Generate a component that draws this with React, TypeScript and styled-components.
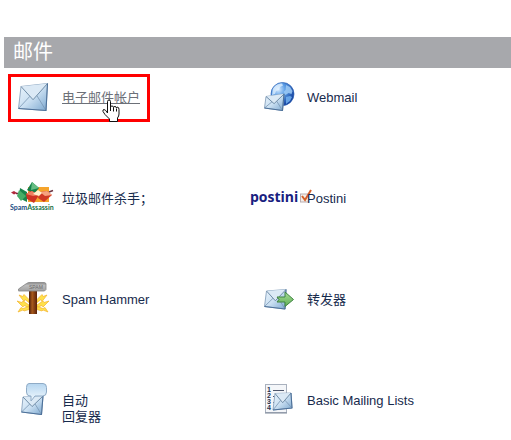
import React from 'react';
import styled, { createGlobalStyle, css } from 'styled-components';

const GlobalStyle = createGlobalStyle`
  * { box-sizing: border-box; }
  body {
    margin: 0;
    background: #fff;
    font-family: "Liberation Sans", Arial, "Noto Sans CJK SC", sans-serif;
    color: #172b4d;
  }
`;

const Panel = styled.main`
  padding: 37px 0 0 4px;
`;

const Heading = styled.h1`
  margin: 0;
  height: 31px;
  padding-left: 9px;
  background: #a7a8ac;
  color: #fff;
  font-size: 20px;
  font-weight: 400;
  line-height: 31px;
`;

const Grid = styled.ul`
  display: grid;
  grid-template-columns: 245px minmax(0, 1fr);
  row-gap: 43px;
  margin: 0;
  padding: 0;
  list-style: none;
`;

const Cell = styled.li`
  position: relative;
  padding-left: 5px;
`;

const Item = styled.a<{ $active?: boolean }>`
  display: flex;
  align-items: flex-start;
  gap: 5px;
  width: fit-content;
  color: inherit;
  text-decoration: none;
  ${(p) =>
    p.$active &&
    css`
      color: #6c7078;
      text-decoration: underline;
      text-underline-offset: 1px;
    `}
`;

const IconSlot = styled.span`
  display: flex;
  flex: none;
  align-items: center;
  justify-content: center;
  width: 48px;
  height: 58px;

  svg {
    flex: none;
    overflow: visible;
  }
`;

const Label = styled.span`
  position: relative;
  padding-top: 22px;
  font-size: 13px;
  line-height: 16px;
  white-space: pre-line;
`;

const Highlight = styled.span`
  position: absolute;
  top: 6px;
  left: 4px;
  width: 142px;
  height: 48px;
  border: 3px solid #f00;
  pointer-events: none;
`;

const Pointer = styled.svg`
  position: absolute;
  top: 31px;
  left: 98px;
  pointer-events: none;
`;

const Gradients = styled.svg`
  position: absolute;
  width: 0;
  height: 0;
`;

type Pt = [number, number];

function Envelope({ tl, tr, br, bl }: { tl: Pt; tr: Pt; br: Pt; bl: Pt }) {
  const mid = (a: Pt, b: Pt, t: number): Pt => [a[0] + (b[0] - a[0]) * t, a[1] + (b[1] - a[1]) * t];
  const tip = mid(mid(tl, tr, 0.5), mid(bl, br, 0.5), 0.6);
  const left = mid(tl, tip, 0.74);
  const right = mid(tr, tip, 0.74);
  return (
    <g strokeLinejoin="round">
      <polygon points={[tl, tr, br, bl].join(' ')} fill="url(#paper)" stroke="#93abc4" />
      <polyline points={[bl, left].join(' ')} fill="none" stroke="#7896b3" strokeWidth="0.8" />
      <polyline points={[br, right].join(' ')} fill="none" stroke="#7896b3" strokeWidth="0.8" />
      <polygon points={[tl, tip, tr].join(' ')} fill="#dbe9f5" stroke="none" />
      <polyline points={[tl, tip, tr].join(' ')} fill="none" stroke="#64829e" strokeWidth="0.9" />
      <polyline points={[bl, br, tr].join(' ')} fill="none" stroke="#4d719a" strokeWidth="1.1" />
    </g>
  );
}

function Defs() {
  return (
    <Gradients aria-hidden="true">
      <defs>
        <linearGradient id="paper" x1="0" y1="0" x2="1" y2="1">
          <stop offset="0" stopColor="#eaf4fc" />
          <stop offset="0.5" stopColor="#cbe0f2" />
          <stop offset="1" stopColor="#7ba7cf" />
        </linearGradient>
        <radialGradient id="globe" cx="0.32" cy="0.3" r="0.75">
          <stop offset="0" stopColor="#d8ecff" />
          <stop offset="0.4" stopColor="#5c9ee6" />
          <stop offset="1" stopColor="#123f9c" />
        </radialGradient>
        <linearGradient id="steel" x1="0" y1="0" x2="0" y2="1">
          <stop offset="0" stopColor="#8a8a8a" />
          <stop offset="0.35" stopColor="#bdbdbd" />
          <stop offset="1" stopColor="#a2a2a2" />
        </linearGradient>
        <linearGradient id="wood" x1="0" y1="0" x2="1" y2="0">
          <stop offset="0" stopColor="#4a1c0a" />
          <stop offset="0.4" stopColor="#a85a1c" />
          <stop offset="1" stopColor="#5a220b" />
        </linearGradient>
        <linearGradient id="bubble" x1="0" y1="0" x2="0" y2="1">
          <stop offset="0" stopColor="#b5d5ef" />
          <stop offset="1" stopColor="#f3faff" />
        </linearGradient>
        <linearGradient id="leaf" x1="0" y1="0" x2="0" y2="1">
          <stop offset="0" stopColor="#a7dc94" />
          <stop offset="1" stopColor="#5fae55" />
        </linearGradient>
      </defs>
    </Gradients>
  );
}

function Svg({ width = 48, children }: { width?: number; children: React.ReactNode }) {
  return (
    <svg width={width} height="48" viewBox={`0 0 ${width} 48`} aria-hidden="true">
      {children}
    </svg>
  );
}

const MailIcon = () => (
  <Svg>
    <Envelope tl={[12, 13.5]} tr={[38.5, 10.5]} br={[37, 37.5]} bl={[9.5, 35.5]} />
  </Svg>
);

const WebmailIcon = () => (
  <Svg>
    <circle cx="28.5" cy="21" r="11.5" fill="url(#globe)" stroke="#2c62b4" strokeWidth="0.7" />
    <path d="M19 16c2-4 6-5.5 9-5.5l1 2-3 1.5-1 3-3 1-1 3-3 1z" fill="#e3f2ff" opacity="0.75" />
    <path d="M32 12l4 2 2.500 4-1 3-3-1-3 2-2-3 2-2z" fill="#9fcbf5" opacity="0.85" />
    <path d="M32 24l4-1 2 1-2 4-4 3z" fill="#72b0ee" opacity="0.85" />
    <Envelope tl={[12, 23.5]} tr={[30, 21]} br={[28.5, 37.5]} bl={[10.5, 35]} />
  </Svg>
);

const SpamAssassinIcon = () => (
  <Svg>
    <rect x="19" y="13" width="21" height="15" fill="#f5a42c" />
    <path d="M2 18.5l3-1.5 3 2-3 1.5z" fill="#b02a3c" />
    <path d="M40 18l4-1.5" stroke="#6a3340" strokeWidth="1.5" />
    <path d="M7 19.5h4" stroke="#7a2540" strokeWidth="1.5" />
    <path d="M11 14l7 4v10l-8-4z" fill="#19854b" />
    <path d="M10 16l7 6-5 5-4-5z" fill="#46ad67" />
    <path d="M18 16l5-8 7 6-5 6z" fill="#14804a" />
    <path d="M23 8l-1 8 8-2z" fill="#65bd82" />
    <path d="M17 20l5-3 8 4-5 8-7-4z" fill="#cf3324" />
    <path d="M17 20l7 2 6-1-7-4z" fill="#ef8061" />
    <path d="M31 18l7-1 5 4-8 7-6-4z" fill="#d03a25" />
    <path d="M31 18l5 4 7-1-5-4z" fill="#f6a37f" />
    <path d="M24 20l5-4 4 3-3 3z" fill="#fff1cf" />
    <text x="1" y="36" fontSize="7" fontWeight="700" fontFamily="Lato, sans-serif">
      <tspan fill="#174b83">Spam</tspan>
      <tspan fill="#167144">Assassin</tspan>
    </text>
  </Svg>
);

const PostiniIcon = () => (
  <Svg width={70}>
    <text x="7" y="28" fontSize="14" fontWeight="700" fontFamily="'Open Sans', sans-serif" fill="#18207f">
      postini
    </text>
    <rect x="57.5" y="20" width="8" height="8" fill="#f3eee9" stroke="#b9adb0" />
    <path d="M59 22l3 4 6-10" fill="none" stroke="#d4602a" strokeWidth="2" />
  </Svg>
);

const HammerIcon = () => (
  <Svg>
    <g fill="#ffe14b" stroke="#f3b32c" strokeWidth="0.7" strokeLinejoin="round">
      <path d="M10 20l4 1.5 1-2 5 5v3l-4-3-1 2z" />
      <path d="M8 26l5 1.5 1-1.5 6 4v2.5l-5-2-1 1.500z" />
      <path d="M9 37l3-4.5 2 1 6-2v3l-5 1.5-1-1z" />
      <path d="M38 20l-4 1.5-1-2-5 5v3l4-3 1 2z" />
      <path d="M40 26l-5 1.5-1-1.5-6 4v2.5l5-2 1 1.500z" />
      <path d="M39 37l-3-4.5-2 1-6-2v3l5 1.5 1-1z" />
    </g>
    <rect x="20" y="15" width="8" height="24" fill="url(#wood)" />
    <path
      d="M9.500 15.500v-1.500l8-5.500 2-1h16l1.500 1v6l-1.500 1.500H9.500z"
      fill="url(#steel)"
      stroke="#858585"
      strokeWidth="0.8"
    />
    <text x="20" y="14" fontSize="5" fontFamily="Liberation Sans, sans-serif" fill="#6a6a6a">
      SPAM
    </text>
  </Svg>
);

const ForwardIcon = () => (
  <Svg>
    <Envelope tl={[12.5, 16]} tr={[32, 14.5]} br={[31, 34]} bl={[10.5, 31.5]} />
    <path
      d="M23 22h8v-5l8.500 7.500-8.500 7v-4.500h-8l2-2.500z"
      fill="url(#leaf)"
      stroke="#3f8442"
      strokeLinejoin="round"
    />
  </Svg>
);

const ResponderIcon = () => (
  <Svg>
    <Envelope tl={[14, 21]} tr={[34, 20]} br={[32.5, 38.5]} bl={[12.5, 36]} />
    <path
      d="M20 7.500h14q3.500 0 3.500 4v4.500q0 4-4 4h-7.500l-4 5v-5h-1q-3.500 0-3.500-4v-4.500q0-4 2.500-4z"
      fill="url(#bubble)"
      stroke="#8fabc6"
    />
  </Svg>
);

const ListIcon = () => (
  <Svg>
    <rect x="11.5" y="8.5" width="21" height="28" fill="#f4f6f9" stroke="#a9b1be" />
    <path d="M11 37h22" stroke="#7d8798" />
    <g fontSize="7" fontWeight="700" fontFamily="Liberation Sans, sans-serif" fill="#27304c">
      <text x="13" y="16">1</text>
      <text x="13" y="22">2</text>
      <text x="13" y="28">3</text>
      <text x="13" y="34">4</text>
    </g>
    <path d="M19 14.500h11M19 20.500h11M19 26.500h11M19 32.500h3" stroke="#4d566b" />
    <Envelope tl={[21, 17.5]} tr={[37, 17]} br={[38, 32]} bl={[19, 34]} />
  </Svg>
);

const HandPointer = () => (
  <Pointer width="18" height="24" viewBox="0 0 18 24" aria-hidden="true">
    <path
      d="M5.500 14V2.500q0-1.500 1.500-1.500t1.500 1.500V8q0-1 1.500-1t1.500 1.500q.2-1 1.500-1t1.500 1.500q.2-.8 1.300-.8T17 10.500V15q0 2-1.500 4v3.500h-8V20L3 15.500 1 12.500q-.5-2 1-2t3.500 3.500z"
      fill="#fff"
      stroke="#111"
      strokeLinejoin="round"
    />
    <path d="M8.500 8v4M11.500 8.500v4M14.500 9.500v3" stroke="#111" fill="none" />
  </Pointer>
);

const items = [
  { label: '电子邮件帐户', Icon: MailIcon, active: true },
  { label: 'Webmail', Icon: WebmailIcon },
  { label: '垃圾邮件杀手；', Icon: SpamAssassinIcon },
  { label: 'Postini', Icon: PostiniIcon },
  { label: 'Spam Hammer', Icon: HammerIcon },
  { label: '转发器', Icon: ForwardIcon },
  { label: '自动\n回复器', Icon: ResponderIcon },
  { label: 'Basic Mailing Lists', Icon: ListIcon },
];

export default function App() {
  return (
    <>
      <GlobalStyle />
      <Defs />
      <Panel lang="zh-CN">
        <Heading>邮件</Heading>
        <Grid>
          {items.map(({ label, Icon, active }) => (
            <Cell key={label}>
              <Item href="#" $active={active}>
                <IconSlot>
                  <Icon />
                </IconSlot>
                <Label>{label}</Label>
              </Item>
              {active && (
                <>
                  <Highlight />
                  <HandPointer />
                </>
              )}
            </Cell>
          ))}
        </Grid>
      </Panel>
    </>
  );
}
